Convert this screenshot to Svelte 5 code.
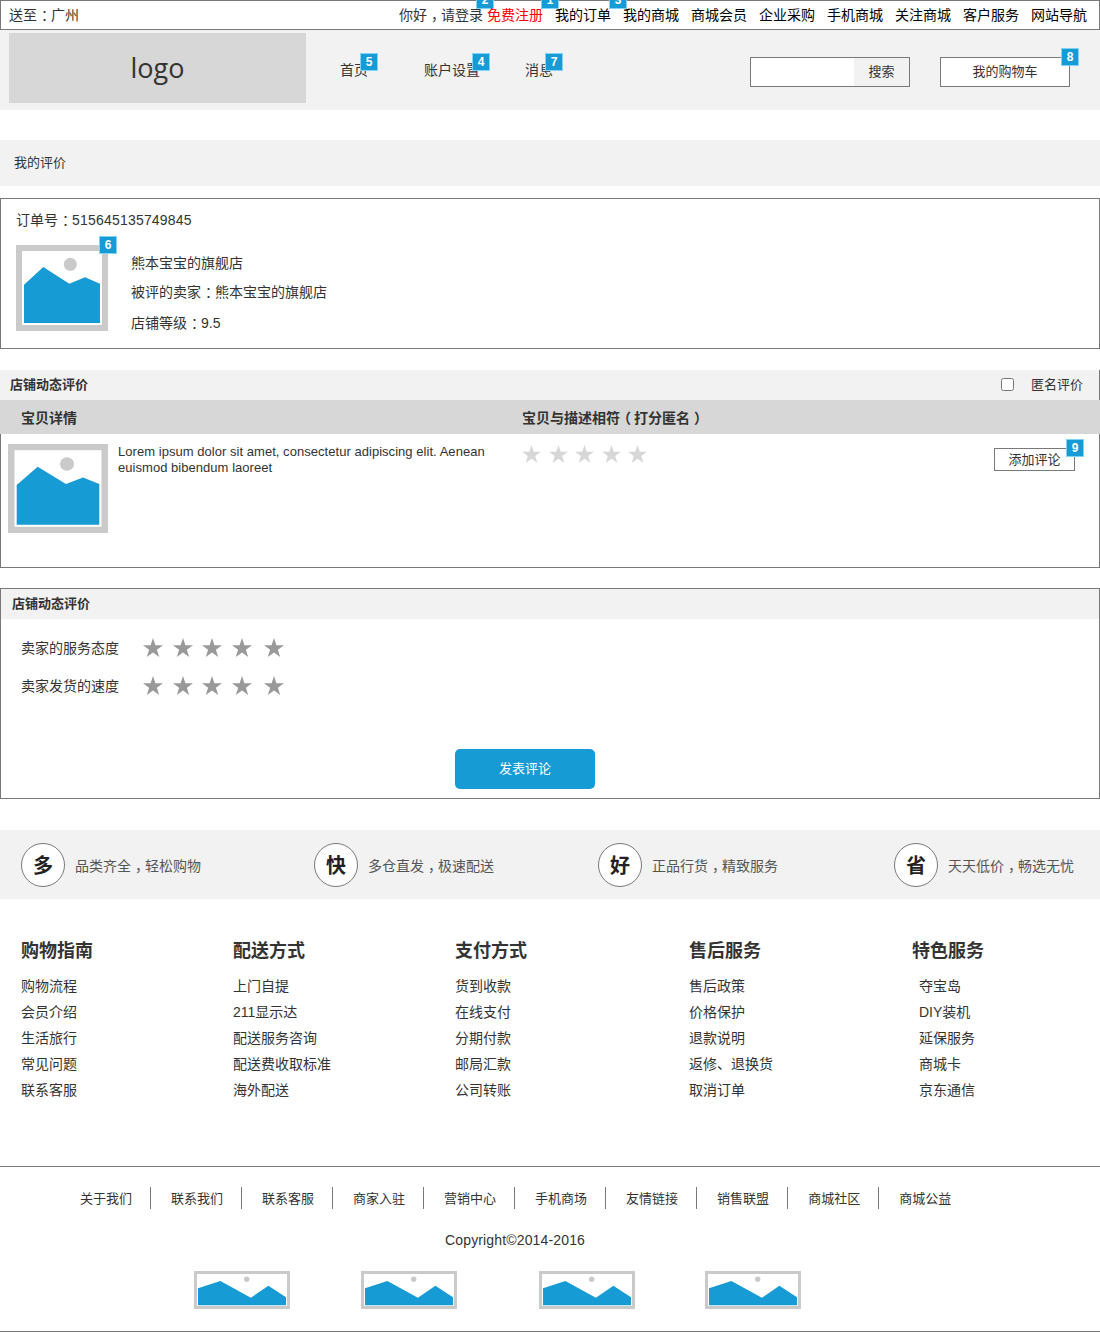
<script>
  const topNav = ['我的订单', '我的商城', '商城会员', '企业采购', '手机商城', '关注商城', '客户服务', '网站导航'];
  const features = [
    ['多', '品类齐全，轻松购物'],
    ['快', '多仓直发，极速配送'],
    ['好', '正品行货，精致服务'],
    ['省', '天天低价，畅选无忧']
  ];
  const columns = [
    ['购物指南', ['购物流程', '会员介绍', '生活旅行', '常见问题', '联系客服']],
    ['配送方式', ['上门自提', '211显示达', '配送服务咨询', '配送费收取标准', '海外配送']],
    ['支付方式', ['货到收款', '在线支付', '分期付款', '邮局汇款', '公司转账']],
    ['售后服务', ['售后政策', '价格保护', '退款说明', '返修、退换货', '取消订单']],
    ['特色服务', ['夺宝岛', 'DIY装机', '延保服务', '商城卡', '京东通信']]
  ];
  const footLinks = ['关于我们', '联系我们', '联系客服', '商家入驻', '营销中心', '手机商场', '友情链接', '销售联盟', '商城社区', '商城公益'];
  const stars = [0, 1, 2, 3, 4];
  const parts = (text) => text.split(/([：，（）])/);
</script>

{#snippet t(text)}{#each parts(text) as part, i}{#if i % 2}<span class={part === '（' ? 'open' : 'punct'}>{part}</span>{:else}{part}{/if}{/each}{/snippet}

{#snippet star(cls)}
  <svg class={cls} viewBox="0 0 20 19" aria-hidden="true"><polygon points="10,0 12.4,7.2 20,7.2 13.9,11.7 16.2,19 10,14.5 3.8,19 6.1,11.7 0,7.2 7.6,7.2" /></svg>
{/snippet}

{#snippet pic(cls)}
  <svg class={cls} viewBox="0 0 92 86" preserveAspectRatio="none" aria-hidden="true">
    <rect x="3" y="3" width="86" height="80" fill="#fff" stroke="#cacaca" stroke-width="6" />
    <circle cx="54.3" cy="19.3" r="6.5" fill="#cacaca" />
    <polygon points="8,39.7 27.3,22 53.3,38.7 69,32.3 84,38.7 84,78 8,78" fill="#169bd5" />
  </svg>
{/snippet}

{#snippet wide()}
  <svg class="pic-wide" viewBox="0 0 96 38" aria-hidden="true">
    <rect x="1.5" y="1.5" width="93" height="35" fill="#fff" stroke="#cacaca" stroke-width="3" />
    <circle cx="52.7" cy="8.3" r="2.7" fill="#cacaca" />
    <polygon points="4,17.3 26.4,10 56.9,26.7 74.4,14.7 92,26.3 92,34.3 4,34.3" fill="#169bd5" />
  </svg>
{/snippet}

<div class="page">
  <div class="topbar">
    <span class="loc">{@render t('送至：广州')}</span>
    <span class="hello tag">{@render t('你好，请登录')}<b class="badge b2">2</b></span>
    <span class="reg tag">免费注册<b class="badge b1">1</b></span>
    {#each topNav as item, i}
      <span class="tnav tag">{item}{#if i === 0}<b class="badge b3">3</b>{/if}</span>
    {/each}
  </div>

  <header class="header">
    <div class="logo">logo</div>
    <nav class="mainnav">
      <span class="mitem m1">首页<b class="badge bn1">5</b></span>
      <span class="mitem m2">账户设置<b class="badge bn2">4</b></span>
      <span class="mitem m3">消息<b class="badge bn1">7</b></span>
    </nav>
    <div class="search">
      <input class="search-input" type="text" aria-label="搜索" />
      <span class="search-btn">搜索</span>
    </div>
    <div class="cart">我的购物车<b class="badge bc">8</b></div>
  </header>

  <div class="crumb">我的评价</div>

  <section class="order">
    <div class="order-no">{@render t('订单号：')}<span class="num">515645135749845</span></div>
    <div class="order-body">
      <div class="order-pic">
        {@render pic('pic-shop')}
        <b class="badge b6">6</b>
      </div>
      <div class="order-info">
        <p class="l1">熊本宝宝的旗舰店</p>
        <p class="l2">{@render t('被评的卖家：熊本宝宝的旗舰店')}</p>
        <p class="l3">{@render t('店铺等级：9.5')}</p>
      </div>
    </div>
  </section>

  <section class="rate">
    <div class="rate-head">
      <strong>店铺动态评价</strong>
      <label class="anon"><input type="checkbox" /><span>匿名评价</span></label>
    </div>
    <div class="table-head">
      <span class="th1">宝贝详情</span>
      <span class="th2">{@render t('宝贝与描述相符（打分匿名）')}</span>
    </div>
    <div class="table-row">
      {@render pic('pic-item')}
      <p class="lorem">Lorem ipsum dolor sit amet, consectetur adipiscing elit. Aenean euismod bibendum laoreet</p>
      <div class="light-stars">
        {#each stars as s (s)}{@render star('star-light')}{/each}
      </div>
      <div class="add">添加评论<b class="badge b9">9</b></div>
    </div>
  </section>

  <section class="shop">
    <div class="shop-head">店铺动态评价</div>
    <div class="score first">
      <span class="score-label">卖家的服务态度</span>
      <div class="dark-stars">{#each stars as s (s)}{@render star('star-dark')}{/each}</div>
    </div>
    <div class="score">
      <span class="score-label">卖家发货的速度</span>
      <div class="dark-stars">{#each stars as s (s)}{@render star('star-dark')}{/each}</div>
    </div>
    <button class="submit" type="button">发表评论</button>
  </section>

  <section class="features">
    {#each features as [ch, text]}
      <div class="feature">
        <span class="circle">{ch}</span>
        <span class="ftext">{@render t(text)}</span>
      </div>
    {/each}
  </section>

  <section class="guide">
    {#each columns as [title, links], i}
      <div class="gcol">
        <h3>{title}</h3>
        <ul class:indent={i === 4}>
          {#each links as link}<li>{link}</li>{/each}
        </ul>
      </div>
    {/each}
  </section>

  <footer class="footer">
    <div class="flinks">
      {#each footLinks as link}<span class="flink">{link}</span>{/each}
    </div>
    <div class="copy">Copyright©2014-2016</div>
    <div class="partners">
      {@render wide()}
      {@render wide()}
      {@render wide()}
      {@render wide()}
    </div>
  </footer>
</div>

<style>
  :global(body) {
    margin: 0;
    background: #fff;
  }
  .page {
    width: 1100px;
    font-family: "Liberation Sans", "Noto Sans CJK SC", sans-serif;
    font-size: 13px;
    color: #333;
  }
  .punct {
    padding-left: 4px;
    margin-right: -4px;
  }
  .open {
    margin-left: -3px;
    padding-right: 3px;
  }
  .num {
    letter-spacing: 0.2px;
  }
  .badge {
    position: absolute;
    box-sizing: border-box;
    width: 18px;
    height: 18px;
    background: #169bd5;
    border: 1px solid #81d3f8;
    color: #fff;
    font-size: 12px;
    font-weight: 700;
    line-height: 16px;
    text-align: center;
  }
  .topbar {
    box-sizing: border-box;
    height: 30px;
    border: 1px solid #797979;
    display: flex;
    padding: 0 12px 0 8px;
    font-size: 14px;
    line-height: 28px;
  }
  .tag {
    position: relative;
  }
  .loc {
    margin-right: auto;
  }
  .hello {
    margin-right: 4px;
  }
  .reg {
    color: #f00;
    margin-right: 12px;
  }
  .tnav {
    color: #000;
    margin-right: 12px;
  }
  .tnav:last-child {
    margin-right: 0;
  }
  .b2 {
    left: 77px;
    top: -10px;
  }
  .b1,
  .b3 {
    left: 54px;
    top: -10px;
  }
  .header {
    height: 80px;
    background: #f2f2f2;
    display: flex;
    align-items: flex-start;
    padding: 0 30px 0 9px;
  }
  .logo {
    width: 297px;
    height: 70px;
    margin-top: 3px;
    background: #d7d7d7;
    font-family: "Open Sans", sans-serif;
    font-size: 27px;
    line-height: 70px;
    text-align: center;
  }
  .mainnav {
    display: flex;
    margin-top: 30px;
    margin-left: 34px;
    font-size: 14px;
    line-height: 20px;
  }
  .mitem {
    position: relative;
  }
  .m2 {
    margin-left: 56px;
  }
  .m3 {
    margin-left: 45px;
  }
  .bn1 {
    left: 20px;
    top: -7px;
  }
  .bn2 {
    left: 48px;
    top: -7px;
  }
  .search {
    box-sizing: border-box;
    width: 160px;
    height: 30px;
    margin: 27px 0 0 auto;
    border: 1px solid #797979;
    display: flex;
  }
  .search-input {
    box-sizing: border-box;
    width: 103px;
    height: 28px;
    border: 0;
    padding: 0;
    background: #fff;
  }
  .search-btn {
    flex: 1;
    line-height: 28px;
    text-align: center;
  }
  .cart {
    box-sizing: border-box;
    position: relative;
    width: 130px;
    height: 30px;
    margin: 27px 0 0 30px;
    border: 1px solid #797979;
    background: #fff;
    line-height: 28px;
    text-align: center;
  }
  .bc {
    left: 120px;
    top: -10px;
  }
  .crumb {
    height: 46px;
    margin-top: 30px;
    padding-left: 14px;
    background: #f2f2f2;
    line-height: 46px;
  }
  .order {
    box-sizing: border-box;
    height: 151px;
    margin-top: 12px;
    border: 1px solid #797979;
    padding: 11px 15px 0;
    font-size: 14px;
    line-height: 20px;
  }
  .order-body {
    display: flex;
    margin-top: 15px;
  }
  .order-pic {
    position: relative;
    width: 92px;
    height: 86px;
  }
  .pic-shop {
    display: block;
    width: 92px;
    height: 86px;
  }
  .b6 {
    left: 83px;
    top: -9px;
  }
  .order-info {
    margin-left: 23px;
  }
  .order-info p {
    margin: 0;
  }
  .l1 {
    padding-top: 8px;
  }
  .l2 {
    padding-top: 9px;
  }
  .l3 {
    padding-top: 11px;
  }
  .rate {
    margin-top: 21px;
  }
  .rate-head {
    box-sizing: border-box;
    height: 30px;
    background: #f2f2f2;
    border-right: 1px solid #797979;
    display: flex;
    align-items: center;
    justify-content: space-between;
    padding: 0 16px 0 10px;
    line-height: 30px;
  }
  .anon {
    display: flex;
    align-items: center;
  }
  .anon input {
    margin: -2px 17px 0 0;
    width: 13px;
    height: 13px;
  }
  .table-head {
    height: 34px;
    background: #d7d7d7;
    display: flex;
    font-size: 14px;
    font-weight: 700;
    line-height: 36px;
    white-space: nowrap;
  }
  .th1 {
    flex: none;
    margin-left: 21px;
    width: 501px;
  }
  .th2 {
    flex: none;
  }
  .table-row {
    box-sizing: border-box;
    height: 134px;
    border: 1px solid #797979;
    border-top: 0;
    display: flex;
    align-items: flex-start;
  }
  .pic-item {
    flex: none;
    width: 100px;
    height: 89px;
    margin: 10px 0 0 7px;
  }
  .lorem {
    width: 392px;
    margin: 10px 0 0 10px;
    font-size: 13px;
    line-height: 16px;
    letter-spacing: 0.04px;
  }
  .light-stars {
    display: flex;
    gap: 7.5px;
    margin: 11px 0 0 12px;
  }
  .star-light {
    display: block;
    width: 19px;
    height: 18px;
    fill: #d7d7d7;
  }
  .add {
    box-sizing: border-box;
    position: relative;
    width: 81px;
    height: 23px;
    margin: 14px 24px 0 auto;
    border: 1px solid #797979;
    line-height: 22px;
    text-align: center;
  }
  .b9 {
    left: 71px;
    top: -10px;
  }
  .shop {
    box-sizing: border-box;
    height: 211px;
    margin-top: 20px;
    border: 1px solid #797979;
  }
  .shop-head {
    height: 30px;
    padding-left: 11px;
    background: #f2f2f2;
    font-weight: 700;
    line-height: 30px;
  }
  .score {
    display: flex;
    align-items: flex-start;
    margin-top: 18px;
    padding-left: 20px;
    line-height: 20px;
    height: 20px;
  }
  .score.first {
    margin-top: 19px;
  }
  .score-label {
    width: 98px;
    margin-right: 24px;
    font-size: 14px;
  }
  .dark-stars {
    display: flex;
    gap: 9.5px;
  }
  .star-dark {
    display: block;
    width: 20px;
    height: 19px;
    fill: #999;
  }
  .star-dark:last-child {
    margin-left: 3px;
  }
  .submit {
    display: block;
    width: 140px;
    height: 40px;
    margin: 53px 0 0 454px;
    padding: 0;
    border: 0;
    border-radius: 5px;
    background: #169bd5;
    color: #fff;
    font: inherit;
    line-height: 40px;
  }
  .features {
    height: 69px;
    margin-top: 31px;
    background: #f2f2f2;
    display: grid;
    grid-template-columns: 293px 284px 296px auto;
    align-items: center;
    padding-left: 21px;
  }
  .feature {
    display: flex;
    align-items: center;
  }
  .circle {
    box-sizing: border-box;
    width: 44px;
    height: 44px;
    border: 1px solid #797979;
    border-radius: 50%;
    background: #fff;
    color: #222;
    font-size: 20px;
    font-weight: 700;
    line-height: 44px;
    text-align: center;
  }
  .ftext {
    margin-left: 10px;
    font-size: 14px;
    color: #555;
  }
  .guide {
    display: grid;
    grid-template-columns: 212px 222px 234px 223px auto;
    padding: 39px 0 0 21px;
  }
  .gcol h3 {
    margin: 0 0 9px;
    font-size: 18px;
    font-weight: 700;
    line-height: 26px;
  }
  .gcol ul {
    margin: 0;
    padding: 0;
    list-style: none;
    font-size: 14px;
    line-height: 26px;
  }
  .gcol ul.indent {
    padding-left: 7px;
  }
  .footer {
    box-sizing: border-box;
    height: 166px;
    margin-top: 63px;
    border-top: 1px solid #797979;
    border-bottom: 1px solid #797979;
  }
  .flinks {
    display: flex;
    margin-top: 20px;
    padding-left: 80px;
  }
  .flink {
    height: 22px;
    padding: 0 18px 0 20px;
    border-right: 1px solid #797979;
    line-height: 24px;
  }
  .flink:first-child {
    padding-left: 0;
  }
  .flink:last-child {
    border-right: 0;
  }
  .copy {
    margin-top: 21px;
    padding-left: 445px;
    font-size: 14px;
    line-height: 20px;
    letter-spacing: 0.15px;
  }
  .partners {
    display: grid;
    grid-template-columns: 167px 178px 166px 96px;
    margin-top: 21px;
    padding-left: 194px;
  }
  .pic-wide {
    display: block;
    width: 96px;
    height: 38px;
  }
</style>
